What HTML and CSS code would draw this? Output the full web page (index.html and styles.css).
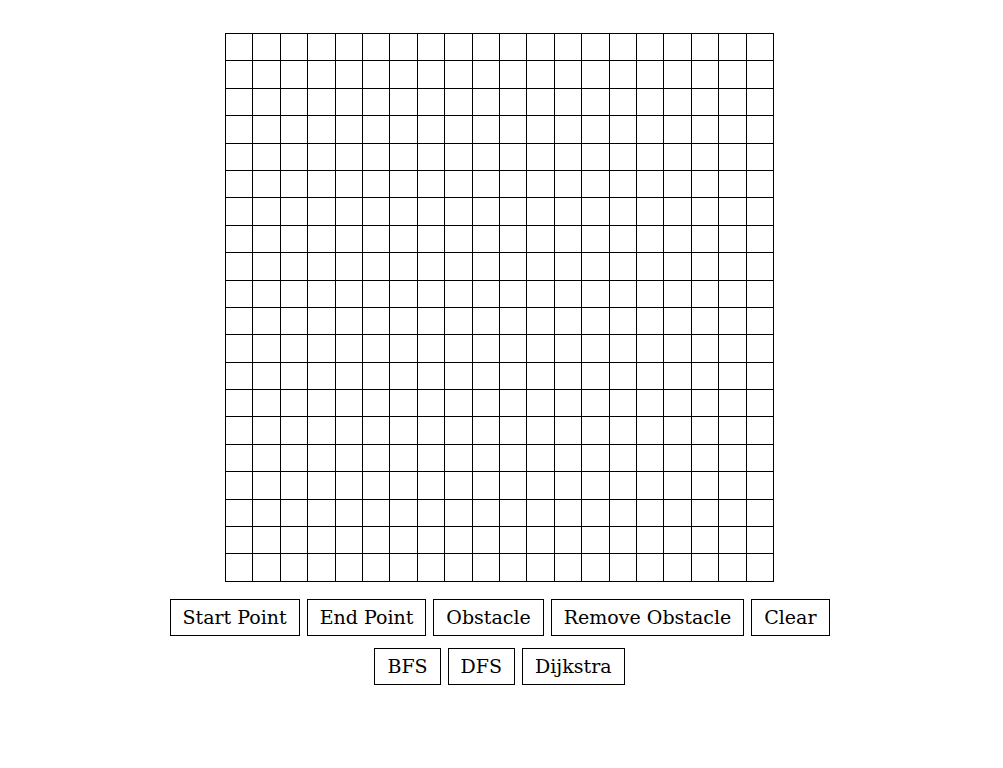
FILE: index.html
```html
<!DOCTYPE html>
<html>
<head>
<meta charset="utf-8">
<link rel="stylesheet" href="styles.css">
</head>
<body>
<div class="app">
  <div class="board" id="board"></div>
  <div class="controls">
    <button class="btn">Start Point</button>
    <button class="btn">End Point</button>
    <button class="btn">Obstacle</button>
    <button class="btn">Remove Obstacle</button>
    <button class="btn">Clear</button>
  </div>
  <div class="controls">
    <button class="btn">BFS</button>
    <button class="btn">DFS</button>
    <button class="btn">Dijkstra</button>
  </div>
</div>
<script>
  var b = document.getElementById('board');
  for (var i = 0; i < 400; i++) {
    var c = document.createElement('div');
    c.className = 'cell';
    b.appendChild(c);
  }
</script>
</body>
</html>
```

FILE: styles.css
```css
html, body {
  margin: 0;
  padding: 0;
  background: #ffffff;
}
.app {
  width: 999px;
  padding-top: 33px;
  display: flex;
  flex-direction: column;
  align-items: center;
  font-family: "DejaVu Serif", serif;
}
.board {
  display: grid;
  grid-template-columns: repeat(20, 27.4px);
  grid-auto-rows: 27.4px;
  border-left: 1px solid #000;
  border-top: 1px solid #000;
  margin-bottom: 17px;
}
.cell {
  box-sizing: border-box;
  border-right: 1px solid #000;
  border-bottom: 1px solid #000;
}
.controls {
  display: flex;
  gap: 7px;
  justify-content: center;
  margin-bottom: 12px;
}
.btn {
  font-family: "DejaVu Serif", serif;
  font-size: 19px;
  color: #000;
  background: #fff;
  border: 1px solid #000;
  border-radius: 0;
  height: 37px;
  padding: 0 12px;
  margin: 0;
}
```
